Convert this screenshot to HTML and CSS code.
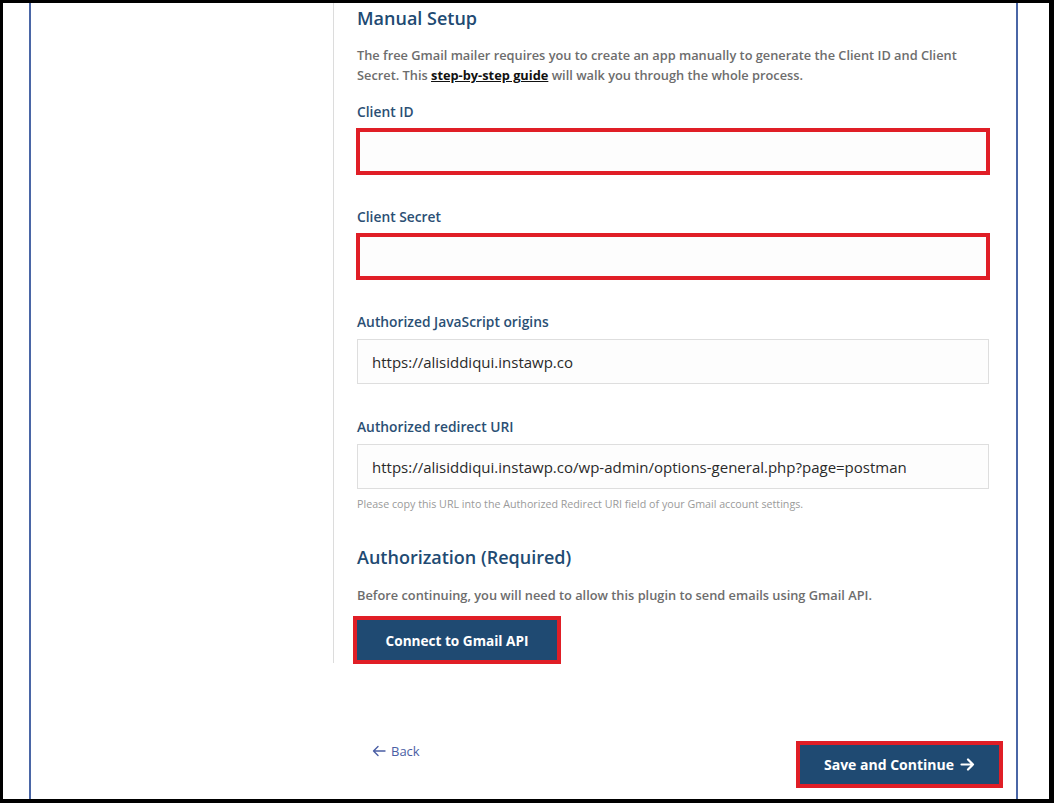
FILE: index.html
```html
<!DOCTYPE html>
<html lang="en">
<head>
  <meta charset="UTF-8">
  <meta name="viewport" content="width=device-width, initial-scale=1.0">
  <title>Postman SMTP - Gmail API Setup</title>
  <link rel="stylesheet" href="styles.css">
</head>
<body>
  <div class="frame">
    <div class="page">
      <div class="wizard">
        <aside class="sidebar"></aside>

        <main class="content">
          <h2>Manual Setup</h2>
          <p class="intro">The free Gmail mailer requires you to create an app manually to generate the Client ID and Client Secret. This <a href="#">step-by-step guide</a> will walk you through the whole process.</p>

          <div class="field">
            <label for="client-id">Client ID</label>
            <input type="text" id="client-id" class="marked">
          </div>

          <div class="field">
            <label for="client-secret">Client Secret</label>
            <input type="text" id="client-secret" class="marked">
          </div>

          <div class="field">
            <label for="js-origins">Authorized JavaScript origins</label>
            <input type="text" id="js-origins" value="https://alisiddiqui.instawp.co" readonly>
          </div>

          <div class="field">
            <label for="redirect-uri">Authorized redirect URI</label>
            <input type="text" id="redirect-uri" value="https://alisiddiqui.instawp.co/wp-admin/options-general.php?page=postman" readonly>
            <small class="help">Please copy this URL into the Authorized Redirect URI field of your Gmail account settings.</small>
          </div>

          <h2 class="auth-title">Authorization (Required)</h2>
          <p class="intro auth-note">Before continuing, you will need to allow this plugin to send emails using Gmail API.</p>
          <button class="btn marked connect">Connect to Gmail API</button>
        </main>
      </div>

      <div class="footer">
        <a href="#" class="back">
          <svg width="14" height="12" viewBox="0 0 14 12" fill="none" stroke="currentColor" stroke-width="1.4" stroke-linecap="round" stroke-linejoin="round"><path d="M13 6H1.5M6 1.5L1.5 6 6 10.5"/></svg>
          Back
        </a>
        <button class="btn marked save">
          Save and Continue
          <svg width="15" height="13" viewBox="0 0 15 13" fill="none" stroke="currentColor" stroke-width="2.2" stroke-linecap="round" stroke-linejoin="round"><path d="M1.5 6.5H13M8 1.5l5 5-5 5"/></svg>
        </button>
      </div>
    </div>
  </div>
</body>
</html>
```

FILE: styles.css
```css
* {
  box-sizing: border-box;
}

body {
  margin: 0;
  background: #fff;
  font-family: "Segoe UI", "Open Sans", Arial, sans-serif;
}

.frame {
  height: 803px;
  border-style: solid;
  border-color: #000;
  border-width: 3px 5px 4px 3px;
  background: #fff;
}

.page {
  height: 100%;
  margin: 0 31px 0 26px;
  border-left: 2px solid #4a66a6;
  border-right: 2px solid #4a66a6;
  display: flex;
  flex-direction: column;
}

.wizard {
  display: flex;
}

.sidebar {
  width: 303px;
  flex-shrink: 0;
  border-right: 1px solid #dcdcdc;
}

.content {
  padding: 0 0 3px 23px;
  width: 656px;
}

h2 {
  margin: 1px 0 0;
  font-size: 18px;
  line-height: 28px;
  font-weight: 600;
  color: #214a72;
}

.intro {
  margin: 13px 0 0;
  font-size: 12.8px;
  line-height: 20px;
  font-weight: 600;
  color: #6d6d6d;
}

.intro a {
  color: #111;
  font-weight: 700;
  text-decoration: underline;
}

.field {
  margin-top: 17px;
}

.field + .field {
  margin-top: 33px;
}

label {
  display: block;
  font-size: 13.8px;
  line-height: 20px;
  font-weight: 600;
  color: #2b4f74;
}

input {
  display: block;
  width: 632px;
  height: 45px;
  margin-top: 7px;
  padding: 0 14px;
  border: 1px solid #dedede;
  border-radius: 0;
  background: #fdfdfd;
  font-family: inherit;
  font-size: 15px;
  color: #2a2a2a;
}

.help {
  display: block;
  margin-top: 8px;
  font-size: 10.7px;
  line-height: 14px;
  color: #9a9a9a;
}

.auth-title {
  margin-top: 32px;
}

.auth-note {
  margin-top: 14px;
}

.btn {
  border: none;
  background: #1f4a72;
  color: #fff;
  font-family: inherit;
  font-weight: 700;
  cursor: pointer;
}

/* red annotation frames */
.marked {
  outline: 4px solid #e01e26;
  outline-offset: 0;
}

input.marked {
  outline-offset: -3px;
}

.connect {
  display: block;
  margin-top: 15px;
  width: 200px;
  height: 40px;
  font-size: 13.6px;
  box-shadow: 3px 1px 0 #2a2f38;
}

.footer {
  flex: 1;
  display: flex;
  justify-content: space-between;
  align-items: flex-end;
  padding: 0 17px 15px 341px;
}

.back {
  display: flex;
  align-items: center;
  gap: 5px;
  margin-bottom: 24px;
  font-size: 13px;
  color: #4a5ea4;
  text-decoration: none;
}

.save {
  display: flex;
  align-items: center;
  justify-content: center;
  gap: 6px;
  width: 199px;
  height: 39px;
  font-size: 14px;
}
```
